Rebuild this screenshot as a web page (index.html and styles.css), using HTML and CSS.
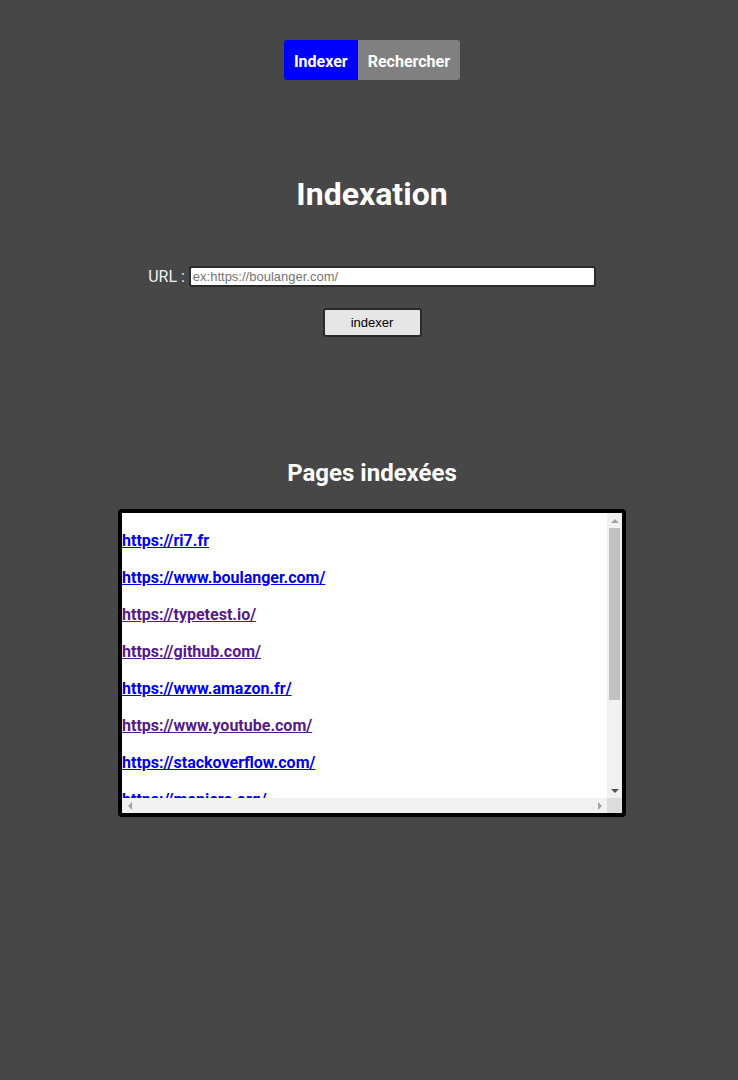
FILE: index.html
```html
<!DOCTYPE html>
<html lang="fr">
<head>
<meta charset="utf-8">
<title>Indexation</title>
<link rel="stylesheet" href="styles.css">
</head>
<body>
<nav class="nav">
  <a class="tab tab-active" href="#">Indexer</a>
  <a class="tab tab-other" href="#">Rechercher</a>
</nav>
<h1 class="title">Indexation</h1>
<form class="form">
  <div class="row">
    <label class="label" for="url">URL :</label>
    <input class="input" id="url" type="text" placeholder="ex:https://boulanger.com/">
  </div>
  <button class="btn" type="button">indexer</button>
</form>
<h2 class="subtitle">Pages indexées</h2>
<div class="box">
  <div class="list">
    <p class="item"><a class="link" href="#">https://ri7.fr</a></p>
    <p class="item"><a class="link" href="#">https://www.boulanger.com/</a></p>
    <p class="item"><a class="link visited" href="#">https://typetest.io/</a></p>
    <p class="item"><a class="link visited" href="#">https://github.com/</a></p>
    <p class="item"><a class="link" href="#">https://www.amazon.fr/</a></p>
    <p class="item"><a class="link visited" href="#">https://www.youtube.com/</a></p>
    <p class="item"><a class="link" href="#">https://stackoverflow.com/</a></p>
    <p class="item"><a class="link" href="#">https://meniere.org/</a></p>
  </div>
  <div class="vbar">
    <span class="arrow-btn"><span class="tri tri-up"></span></span>
    <span class="vtrack"><span class="vthumb"></span></span>
    <span class="arrow-btn"><span class="tri tri-down"></span></span>
  </div>
  <div class="hbar">
    <span class="arrow-btn"><span class="tri tri-left"></span></span>
    <span class="htrack"></span>
    <span class="arrow-btn"><span class="tri tri-right"></span></span>
  </div>
  <div class="corner"></div>
</div>
</body>
</html>
```
FILE: styles.css
```css
html {
  background: #474747;
}
body {
  margin: 0;
  padding: 40px 8px 8px 14px;
  font-family: Roboto, "Liberation Sans", sans-serif;
  color: #ffffff;
  background: #474747;
}
.nav {
  display: flex;
  justify-content: center;
}
.tab {
  display: block;
  height: 40px;
  box-sizing: border-box;
  padding: 4px 10px 0;
  line-height: 36px;
  font-size: 16px;
  font-weight: 700;
  color: #ffffff;
  text-decoration: none;
}
.tab-active {
  background: #0000ff;
  border-radius: 3px 0 0 3px;
}
.tab-other {
  background: #808080;
  border-radius: 0 3px 3px 0;
}
.title {
  margin: 96px 0 0;
  font-size: 32px;
  line-height: 37px;
  font-weight: 700;
  text-align: center;
}
.form {
  margin-top: 53px;
  display: flex;
  flex-direction: column;
  align-items: center;
}
.row {
  display: flex;
  align-items: center;
  gap: 4px;
}
.label {
  font-size: 16px;
  color: #f2f2f2;
}
.input {
  box-sizing: border-box;
  width: 407px;
  height: 21px;
  margin: 0;
  padding: 1px 2px;
  border: 2px solid #2a2a2a;
  border-radius: 3px;
  background: #ffffff;
  font-family: "Liberation Sans", Arial, sans-serif;
  font-size: 13px;
}
.input::placeholder {
  color: #757575;
}
.btn {
  box-sizing: border-box;
  margin-top: 21px;
  width: 99px;
  height: 29px;
  border: 2px solid #2a2a2a;
  border-radius: 3px;
  background: #e6e6e6;
  color: #000000;
  font-family: "Liberation Sans", Arial, sans-serif;
  font-size: 13px;
}
.subtitle {
  margin: 122px 0 0;
  font-size: 24px;
  line-height: 28px;
  font-weight: 700;
  text-align: center;
}
.box {
  width: 500px;
  margin: 22px auto 0;
  border: 4px solid #000000;
  border-radius: 4px;
  background: #ffffff;
  display: grid;
  grid-template-columns: 485px 15px;
  grid-template-rows: 285px 15px;
  overflow: hidden;
}
.list {
  overflow: hidden;
  white-space: nowrap;
  padding-top: 1px;
}
.item {
  margin: 16px 0;
  font-size: 16px;
  line-height: 21px;
}
.link {
  font-weight: 700;
  color: #0000ee;
}
.link.visited {
  color: #551a8b;
}
.vbar {
  background: #f1f1f1;
  display: flex;
  flex-direction: column;
}
.hbar {
  background: #f1f1f1;
  display: flex;
}
.corner {
  background: #dcdcdc;
}
.arrow-btn {
  width: 15px;
  height: 15px;
  flex: none;
  display: flex;
  align-items: center;
  justify-content: center;
}
.vtrack {
  flex: 1;
  position: relative;
}
.vthumb {
  position: absolute;
  left: 2px;
  right: 2px;
  top: 0;
  height: 172px;
  background: #c1c1c1;
}
.htrack {
  flex: 1;
}
.tri {
  width: 0;
  height: 0;
  display: block;
}
.tri-up {
  border-left: 4px solid transparent;
  border-right: 4px solid transparent;
  border-bottom: 4px solid #a3a3a3;
}
.tri-down {
  border-left: 4px solid transparent;
  border-right: 4px solid transparent;
  border-top: 4px solid #505050;
}
.tri-left {
  border-top: 4px solid transparent;
  border-bottom: 4px solid transparent;
  border-right: 4px solid #a3a3a3;
}
.tri-right {
  border-top: 4px solid transparent;
  border-bottom: 4px solid transparent;
  border-left: 4px solid #a3a3a3;
}
```
